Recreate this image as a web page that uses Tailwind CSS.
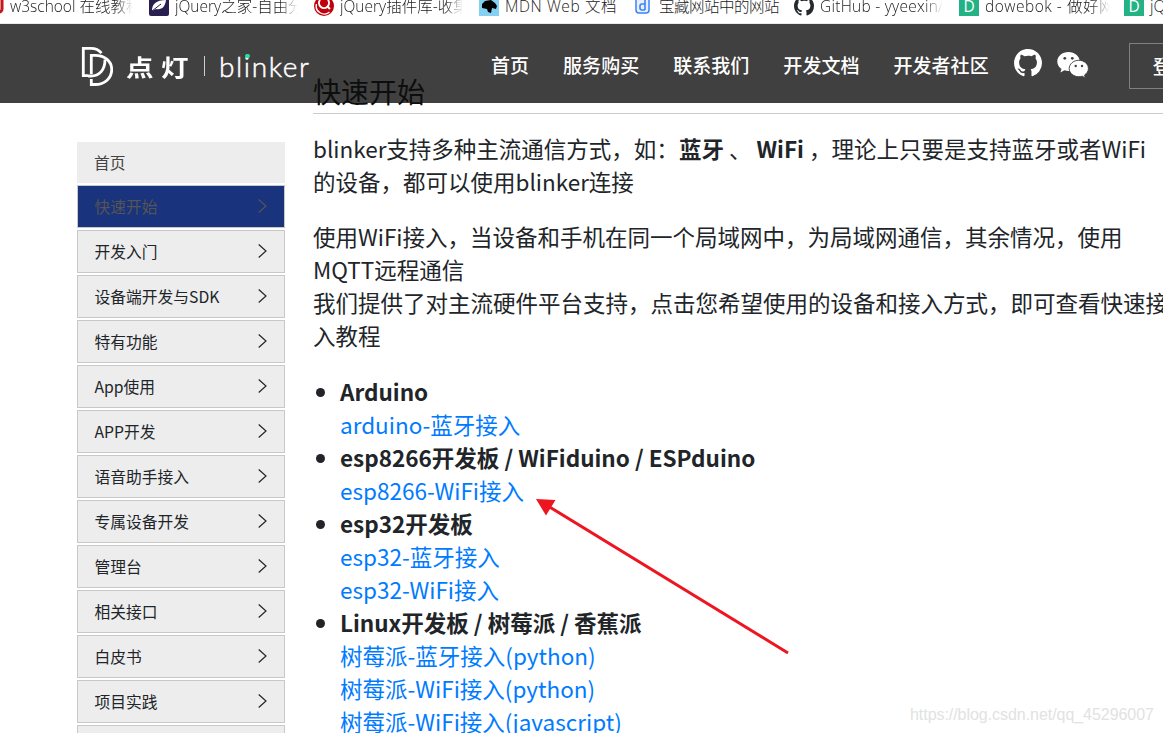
<!doctype html>
<html lang="zh-CN">
  <head>
    <meta charset="UTF-8" />
    <meta name="viewport" content="width=device-width, initial-scale=1.0" />
    <title>快速开始 | blinker</title>
    <script src="https://cdn.jsdelivr.net/npm/@tailwindcss/browser@4"></script>
  </head>
  <body
    class="relative h-[733px] w-[1163px] overflow-hidden bg-white font-['Noto_Sans_CJK_SC',sans-serif] text-[#212529]"
  >
    <!-- bookmarks -->
    <nav
      class="flex h-6 overflow-hidden border-b border-[#e8eaed] font-['Open_Sans','Noto_Sans_CJK_SC',sans-serif] text-[15.5px] leading-6 font-light whitespace-nowrap text-[#222]"
    >
      <a class="-ml-[16px] flex w-[165px] shrink-0">
        <svg class="-mt-1 h-5 w-5 shrink-0" viewBox="0 0 20 20">
          <rect x="1" y="1" width="17" height="15" rx="3" fill="none" stroke="#c4161c" stroke-width="3" />
        </svg>
        <span class="-mt-[6px] ml-[6px] w-[123px] overflow-hidden mask-r-from-85%">w3school 在线教程</span>
      </a>
      <a class="flex w-[165px] shrink-0">
        <svg class="-mt-1 h-5 w-5 shrink-0" viewBox="0 0 20 20">
          <rect width="20" height="20" rx="2" fill="#291f4e" />
          <path d="M3 15C3 8 7 4 17 4c-1 7-4 10-10 9z" fill="#fff" />
          <path d="M3 15 12 8" stroke="#291f4e" fill="none" />
        </svg>
        <span class="-mt-[6px] ml-[6px] w-[123px] overflow-hidden mask-r-from-85%">jQuery之家-自由分享</span>
      </a>
      <a class="flex w-[165px] shrink-0">
        <svg class="-mt-1 h-5 w-5 shrink-0" viewBox="0 0 20 20">
          <circle cx="10" cy="10" r="10" fill="#c1000b" />
          <path d="M2.500 8a8 8 0 0 0 13 8" fill="none" stroke="#fff" stroke-width="1.4" />
          <path d="M6 4a5 5 0 1 0 8 0M13 10l3 3" fill="none" stroke="#fff" stroke-width="2" />
        </svg>
        <span class="-mt-[6px] ml-[6px] w-[123px] overflow-hidden mask-r-from-85%">jQuery插件库-收集最</span>
      </a>
      <a class="flex w-[155px] shrink-0">
        <svg class="-mt-1 h-5 w-5 shrink-0" viewBox="0 0 20 20">
          <rect width="20" height="20" fill="#83d0f2" />
          <path d="M3 8 6 5 12 4l4 3 2 3-1 3-4-1-1 5-3-1-1-3-5-1z" fill="#000" />
        </svg>
        <span class="-mt-[6px] ml-[6px] tracking-[.6px]">MDN Web 文档</span>
      </a>
      <a class="flex w-[160px] shrink-0">
        <svg class="-mt-1 h-5 w-5 shrink-0" viewBox="0 0 20 20">
          <rect x="2" y="1" width="13" height="16" rx="3" fill="#e8f0ff" stroke="#3b82f6" stroke-width="1.5" />
          <path d="M11 4v10M11 8H8a2 2 0 0 0-2 2v2a2 2 0 0 0 2 2h3" fill="none" stroke="#3b82f6" stroke-width="1.6" />
        </svg>
        <span class="-mt-[6px] ml-[5px] tracking-[-.5px]">宝藏网站中的网站</span>
      </a>
      <a class="flex w-[165px] shrink-0">
        <svg class="-mt-1 h-5 w-5 shrink-0" viewBox="0 0 16 16" fill="#24292e">
          <path d="M8 0C3.58 0 0 3.58 0 8c0 3.54 2.29 6.53 5.47 7.59.4.07.55-.17.55-.38 0-.19-.01-.82-.01-1.49-2.01.37-2.53-.49-2.69-.94-.09-.23-.48-.94-.82-1.13-.28-.15-.68-.52-.01-.53.63-.01 1.08.58 1.23.82.72 1.21 1.87.87 2.33.66.07-.52.28-.87.51-1.07-1.78-.2-3.64-.89-3.64-3.95 0-.87.31-1.59.82-2.15-.08-.2-.36-1.02.08-2.12 0 0 .67-.21 2.2.82A7.6 7.6 0 0 1 8 3.86c.68 0 1.36.09 2 .27 1.53-1.04 2.2-.82 2.2-.82.44 1.1.16 1.92.08 2.12.51.56.82 1.27.82 2.15 0 3.07-1.87 3.75-3.65 3.95.29.25.54.73.54 1.48 0 1.07-.01 1.93-.01 2.2 0 .21.15.46.55.38A8.01 8.01 0 0 0 16 8c0-4.42-3.58-8-8-8z" />
        </svg>
        <span class="-mt-[6px] ml-[6px] w-[123px] overflow-hidden tracking-[.25px] mask-r-from-85%">GitHub - yyeexin/</span>
      </a>
      <a class="flex w-[165px] shrink-0">
        <span class="-mt-1 flex h-5 w-5 shrink-0 items-center justify-center bg-[#22b285] font-normal text-white">D</span>
        <span class="-mt-[6px] ml-[6px] w-[125px] overflow-hidden tracking-[.5px] mask-r-from-85%">dowebok - 做好网</span>
      </a>
      <a class="flex w-[165px] shrink-0">
        <span class="-mt-1 flex h-5 w-5 shrink-0 items-center justify-center bg-[#22b285] font-normal text-white">D</span>
        <span class="-mt-[6px] ml-[6px]">jQuery</span>
      </a>
    </nav>

    <header class="flex h-[79px] items-center bg-[#404040] pl-[81px] whitespace-nowrap text-white">
      <a class="flex h-10 w-[410px] shrink-0 items-center pt-[5px]">
        <svg class="h-10 w-8 shrink-0" viewBox="0 0 32 40" fill="none" stroke="#fff" stroke-width="2.8">
          <path d="M20.500 7.200C18 4 14.500 2.300 10 2.300H2.300v27.400H7" />
          <path d="M7 30h3c8 0 14-5.500 14-16.500" />
          <path d="M10.300 28V9.300H14c10 0 16.700 6 16.700 14.300S24 38.500 14 38.500h-3.700v-5.500" />
        </svg>
        <span class="ml-[13px] w-[64px] origin-center scale-y-[.84] text-[27.500px] leading-10 font-bold tracking-[7.500px]">点灯</span>
        <span class="-mt-[1px] ml-[14px] h-5 w-px bg-[#ccc]"></span>
        <span class="relative ml-[14px] font-[Lato,sans-serif] text-[28px] leading-10 font-light tracking-[1.600px] [-webkit-text-stroke:.5px_white]">
          blinker
          <i class="absolute top-[8px] left-[26px] h-[4px] w-[5px] rounded-full bg-[#27e0a8]"></i>
        </span>
      </a>
      <nav class="flex gap-[34px] pt-1 text-[19.050px] font-medium">
        <a>首页</a>
        <a>服务购买</a>
        <a>联系我们</a>
        <a>开发文档</a>
        <a>开发者社区</a>
      </nav>
      <svg class="-mt-px ml-[25px] h-7 w-7 shrink-0" viewBox="0 0 16 16" fill="#fff">
        <path d="M8 0C3.58 0 0 3.58 0 8c0 3.54 2.29 6.53 5.47 7.59.4.07.55-.17.55-.38 0-.19-.01-.82-.01-1.49-2.01.37-2.53-.49-2.69-.94-.09-.23-.48-.94-.82-1.13-.28-.15-.68-.52-.01-.53.63-.01 1.08.58 1.23.82.72 1.21 1.87.87 2.33.66.07-.52.28-.87.51-1.07-1.78-.2-3.64-.89-3.64-3.95 0-.87.31-1.59.82-2.15-.08-.2-.36-1.02.08-2.12 0 0 .67-.21 2.2.82A7.6 7.6 0 0 1 8 3.86c.68 0 1.36.09 2 .27 1.53-1.04 2.2-.82 2.2-.82.44 1.1.16 1.92.08 2.12.51.56.82 1.27.82 2.15 0 3.07-1.87 3.75-3.65 3.95.29.25.54.73.54 1.48 0 1.07-.01 1.93-.01 2.2 0 .21.15.46.55.38A8.01 8.01 0 0 0 16 8c0-4.42-3.58-8-8-8z" />
      </svg>
      <svg class="mt-[2px] ml-[15px] h-[26px] w-8 shrink-0" viewBox="0 0 32 26">
        <path d="M11.500 0C5.200 0 .3 4.200.3 9.500c0 3 1.600 5.600 4.200 7.400L3.400 20.400l4-2.100c1.400.4 2.700.6 4.100.6 6.200 0 11.200-4.200 11.200-9.400S17.700 0 11.500 0z" fill="#fff" />
        <path d="M21.800 8.300c-5.300 0-9.600 3.700-9.600 8.200s4.300 8.200 9.600 8.200c1.200 0 2.300-.2 3.400-.5l3.200 1.700-.9-2.900c2.300-1.500 3.900-3.800 3.900-6.500 0-4.500-4.300-8.200-9.600-8.200z" fill="#fff" stroke="#404040" stroke-width=".9" />
        <g fill="#404040">
          <circle cx="7.800" cy="6.300" r="1.400" />
          <circle cx="15.300" cy="6.300" r="1.400" />
          <circle cx="18.700" cy="14" r="1.200" />
          <circle cx="25" cy="14" r="1.200" />
        </g>
      </svg>
      <a class="mt-[4px] ml-[40px] flex h-[46px] w-[86px] shrink-0 items-center border border-[#808080] pt-[2px] pl-[23px] text-[19px] font-medium">登录</a>
    </header>

    <div class="flex">
      <aside class="mt-[39px] ml-[77px] w-[208px] shrink-0">
        <ul id="menu" class="flex flex-col gap-[2px] text-[15.750px]">
          <li class="flex h-[41px] items-center bg-[#ededed] pl-[17px] text-[#444]">首页</li>
        </ul>
      </aside>

      <main class="relative -mt-[30px] ml-[28px] w-[860px] shrink-0 text-[22.500px] leading-[33px] whitespace-nowrap">
        <h1 class="h-[41px] border-b border-[#ccc] text-[28px] leading-[37px] text-[#0d0d0d]">快速开始</h1>
        <p class="mt-[18px]">
          blinker支持多种主流通信方式，如：<b class="font-bold">蓝牙</b> 、 <b class="font-bold">WiFi</b> ，理论上只要是支持蓝牙或者WiFi<br />
          的设备，都可以使用blinker连接
        </p>
        <p class="mt-[22px]">
          使用WiFi接入，当设备和手机在同一个局域网中，为局域网通信，其余情况，使用<br />
          MQTT远程通信<br />
          我们提供了对主流硬件平台支持，点击您希望使用的设备和接入方式，即可查看快速接<br />
          入教程
        </p>
        <ul id="boards" class="mt-[23px]"></ul>
      </main>
    </div>

    <svg class="absolute top-[490px] left-[530px] h-[170px] w-[265px]" viewBox="530 490 265 170">
      <path d="M548 506 788 653" stroke="#ed1620" stroke-width="3" />
      <path d="M536 499 555.500 500 546 515.500z" fill="#ed1620" />
    </svg>
    <p class="absolute top-[704px] left-[910px] font-['Liberation_Sans',sans-serif] text-[16px] leading-[22px] tracking-[-.05px] whitespace-nowrap text-[#e2e2e2]">
      https://blog.csdn.net/qq_45296007
    </p>

    <script>
      const items = ["快速开始", "开发入门", "设备端开发与SDK", "特有功能", "App使用", "APP开发", "语音助手接入", "专属设备开发", "管理台", "相关接口", "白皮书", "项目实践", ""];
      const Item = (name, i) =>
        `<li class="flex h-[43px] shrink-0 items-center justify-between border border-[#c8c8c8] pl-[16.500px] pr-[17px] ${
          i === 0 ? "bg-[#1a337d] text-[#555]" : "bg-[#ededed]"
        }">${name}<svg class="-mt-[2px] ml-auto h-[14px] w-[9px]" viewBox="0 0 9 14" fill="none" stroke="currentColor" stroke-width="1.2"><path d="M.7.500 8 7 .7 13.500" /></svg></li>`;
      document.getElementById("menu").innerHTML += items.map(Item).join("");

      const boards = [
        ["Arduino", "arduino-蓝牙接入"],
        ["esp8266开发板 / WiFiduino / ESPduino", "esp8266-WiFi接入"],
        ["esp32开发板", "esp32-蓝牙接入", "esp32-WiFi接入"],
        ["Linux开发板 / 树莓派 / 香蕉派", "树莓派-蓝牙接入(python)", "树莓派-WiFi接入(python)", "树莓派-WiFi接入(javascript)"],
      ];
      const Board = ([name, ...links]) =>
        `<li class="flex"><span class="mt-[13px] ml-[3px] mr-[15px] h-[9px] w-[9px] rounded-full bg-[#212529]"></span><div><b class="block font-bold">${name}</b>${links
          .map((x) => `<a class="block text-[#007bff]">${x}</a>`)
          .join("")}</div></li>`;
      document.getElementById("boards").innerHTML = boards.map(Board).join("");
    </script>
  </body>
</html>
